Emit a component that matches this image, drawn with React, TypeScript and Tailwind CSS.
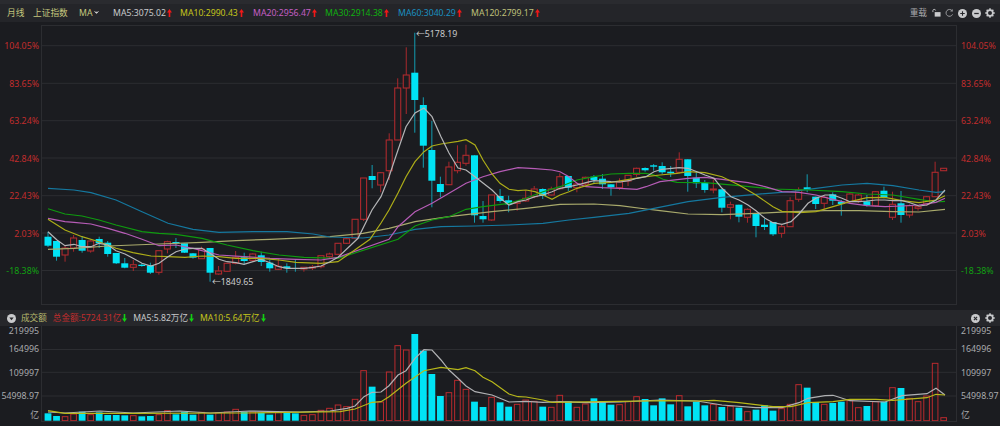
import React from "react";
import { ChevronDown } from "lucide-react";

const FONT = "font-['Noto_Sans','Noto_Sans_CJK_SC',sans-serif]";

// type, wick top, body top, body bottom, wick bottom
type Candle = [0 | 1, number, number, number, number];

const CANDLES: Candle[] = [
  [0, 231.7, 236.7, 245.7, 247], [0, 241, 241, 256.7, 260.7], [1, 245, 248, 255, 261.7], [1, 235, 238, 248, 251.7],
  [0, 236, 240, 250.7, 252.7], [1, 240, 241, 251, 252.7], [0, 236.7, 239, 243.3, 248], [0, 241, 242.7, 254, 256.7],
  [0, 253, 253, 263.3, 264], [0, 258, 263.3, 267.7, 268.3], [1, 260, 264.7, 267.3, 271], [0, 263.3, 264.7, 266, 266.7],
  [0, 262.7, 265.3, 272.7, 274], [1, 250.7, 250.7, 272.3, 274.7], [1, 240.7, 241.7, 249, 253.3], [0, 238, 242, 243.3, 248],
  [0, 243.3, 243.3, 252.7, 253], [0, 253, 253.3, 257.7, 258.7], [1, 246.7, 249, 258.7, 259], [0, 248, 248, 272.7, 281.7],
  [1, 266, 271, 274, 274.7], [1, 263.3, 263.3, 271.3, 271.7], [1, 251, 257.3, 263.3, 264.3], [0, 252.7, 257.3, 261, 264.3],
  [1, 253.3, 254, 260.3, 261.7], [0, 251.7, 255.3, 262, 266], [0, 260, 262.7, 268.3, 271.7], [1, 258.3, 266.3, 269.3, 270],
  [0, 263.3, 266.3, 268.3, 272.7], [0, 260, 268.3, 269, 271.7], [1, 267, 267.3, 269, 271.7], [1, 265, 267, 268, 270],
  [1, 255.7, 255.7, 266.7, 268.3], [1, 252.7, 254, 256.7, 258.3], [1, 243, 243.3, 254.3, 255], [1, 237.7, 238.7, 243.3, 244],
  [1, 219, 219.3, 238.3, 239.3], [1, 178, 178, 219.3, 221], [0, 165, 176, 180, 188.3], [1, 172, 172.7, 185, 192.3],
  [1, 133.3, 140, 170.7, 180], [1, 78.3, 88, 140, 140], [1, 47.3, 75, 88, 114], [0, 32.7, 72.7, 100, 132.7],
  [0, 97.3, 105, 145.7, 167.7], [0, 121, 150, 180.7, 207.3], [0, 176.7, 184, 192, 197.3], [1, 161.7, 167, 184.7, 185],
  [1, 145.3, 162.3, 170.7, 173.3], [1, 144.7, 155.3, 163.3, 165.7], [0, 155.3, 155.3, 215.3, 222.7], [0, 201, 216, 219.3, 222.7],
  [1, 195, 195, 220, 220.7], [0, 189, 196, 201, 202.7], [0, 195.7, 200.3, 204.3, 212.3], [1, 201.7, 201.7, 203.3, 210.7],
  [1, 190.7, 198.3, 201, 201.7], [1, 186, 189, 196.7, 198.3], [0, 188.3, 189, 196, 199], [1, 186.7, 189, 195, 195.7],
  [1, 173.3, 176.7, 188.7, 190], [0, 176, 176, 187.7, 191], [1, 182.3, 184, 187.7, 192.3], [1, 176.7, 177.3, 184, 185],
  [0, 175, 176.7, 180, 183.3], [0, 174, 178.7, 184.3, 189], [0, 184.3, 184.3, 187.3, 195.7], [1, 178.3, 182, 187.7, 190],
  [1, 175, 175.3, 181, 186], [1, 167.7, 168.3, 174.3, 176.7], [0, 167.3, 168, 170.3, 171.7], [0, 164, 165.3, 166.7, 170.7],
  [0, 162.3, 166, 172.3, 174], [0, 166, 171.7, 173.3, 177], [1, 152.3, 159.3, 172.3, 173.3], [0, 159.3, 159.3, 176, 191.7],
  [0, 172, 177.7, 183.3, 188], [0, 180, 182.7, 190, 192.7], [1, 179.3, 189, 190, 193.3], [0, 189.3, 189.3, 207.7, 212.3],
  [1, 201.7, 204.7, 207.3, 219.3], [0, 204.7, 204.7, 216.7, 222.3], [1, 208.3, 209.3, 217.3, 222.7], [0, 213.3, 213.3, 226, 237.3],
  [0, 218.7, 224.7, 227, 230], [0, 222, 222, 234.3, 236], [1, 225, 226.7, 233.3, 237.7], [1, 197.3, 200.7, 226.7, 226.7],
  [1, 187.3, 190, 199.3, 201.7], [0, 174.3, 187.3, 189.7, 192.3], [0, 196.7, 196.7, 204, 209], [1, 195, 197.3, 203.3, 209],
  [0, 192.3, 194.3, 200.7, 205], [0, 200, 201.7, 204, 215.7], [1, 193.3, 194, 201.7, 203.3], [1, 194, 195, 200.7, 203],
  [0, 195, 201.3, 205.3, 206.7], [1, 191, 191.7, 205.7, 206.7], [0, 186.7, 190.7, 197.7, 198.3], [1, 191.7, 204.3, 217.3, 220],
  [0, 191, 203.3, 215, 222.7], [1, 204.3, 205.7, 215, 217.7], [1, 205, 206.7, 208.3, 210.7], [1, 196, 196.7, 204, 205.7],
  [1, 161.7, 172.3, 196.7, 196.7], [1, 168.3, 168.3, 170.7, 170.7],
];

// bar top in 3x crop pixels: y = 300 + top / 3
const VOLUMES = [
  340, 348, 350, 342, 335, 344, 337, 345, 345, 346, 347, 349, 348, 344, 332, 343, 335, 344, 337, 344, 338, 336, 328, 335, 336, 338,
  344, 338, 337, 340, 346, 344, 331, 325, 315, 320, 298, 212, 260, 306, 216, 137, 150, 102, 152, 222, 288, 278, 241, 268, 305, 321,
  292, 307, 320, 313, 300, 304, 320, 322, 286, 304, 322, 312, 295, 305, 314, 314, 305, 290, 297, 316, 295, 313, 287, 319, 305, 316,
  313, 321, 319, 323, 335, 329, 316, 332, 326, 313, 254, 263, 306, 313, 309, 305, 302, 323, 318, 305, 305, 263, 264, 295, 305, 288,
  190, 353,
];

const MA5 = "48,231.7 57,240 65,245.7 74,244.3 82,246.7 91,246.7 99,243.3 108,245 116,250.7 125,254 133,258.3 142,263.3 151,266 159,263.3 168,256.7 176,251.7 185,249 193,248.3 202,248.3 210,253.3 219,259.3 227,261.7 236,262.7 244,264.3 253,261.7 261,259.3 270,262.7 279,266.7 287,268.3 296,268.3 304,268.3 313,267.3 321,266 330,261.7 338,257.3 358,238.3 372,210 381,196.7 389,176.7 398,150 406,126.7 415,113 424,108 432,116.7 441,136.7 449,153 458,168 466,170 475,176.7 483,183 492,190 500,198 509,205 518,201.7 526,200 535,196.7 543,195 552,191.7 560,188.3 569,186.7 577,185 586,182.7 594,180.7 603,181 611,181.7 620,182 629,180.7 637,178.3 646,176.7 654,171.7 662,169.3 679,167.7 688,168.3 697,171.7 705,175 714,178.3 722,188.3 731,196.7 739,200 748,205 756,210.7 765,218.3 773,222.7 782,224.3 791,221.7 799,214 808,203.3 816,198.3 825,195 833,195 842,198.3 850,201.7 859,201.7 867,201 876,200 885,200 893,200.7 902,200.7 910,202.7 919,206 927,205 936,200 945,190";
const MA10 = "48,219.3 65,230 82,236.7 99,241.7 116,248.3 133,252.7 151,256 168,256.7 185,257.3 202,256 219,256.7 236,258.3 261,258.3 279,260 296,262.3 321,263.3 338,261.7 370,239.3 381,223 389,210 398,193 406,176.7 415,161.7 424,151.7 432,146 441,144 458,141.3 466,139.7 475,145 483,160 492,174 500,183.3 509,189.3 518,190.7 526,190 535,191.7 543,195 552,199.3 560,195 569,191.7 577,188.3 594,183.3 611,182.3 629,179.3 646,176.7 660,175 677,173.3 688,171.7 705,172.7 722,176.7 739,185 756,195 773,206.7 782,211.3 799,212.7 816,211.7 833,206.7 850,201.7 867,197.7 885,197.3 902,200.7 919,202.7 936,200 945,195.7";
const MA20 = "48,218.3 65,221.7 74,222.3 91,224 108,228.3 125,233.3 142,239.3 159,245.7 176,245 193,248.3 219,255 244,256.7 270,258.3 296,259.3 321,260 338,257.3 389,239.3 398,226.7 415,211.7 432,203.3 449,193.3 466,183.3 483,176.7 500,171.7 518,167.7 535,168.7 552,170 560,171.7 569,176.7 577,183.3 586,186.7 603,187.7 620,188.3 637,189.3 646,186.7 660,181.7 688,178.3 705,177.3 722,179.3 748,182.7 765,186.7 782,191.7 799,192.3 816,195 833,199.3 850,203.3 867,205.7 885,206.7 902,206 919,205 936,202.3 945,198.3";
const MA30 = "48,208.7 65,214 82,216 99,220 116,225 142,231.7 159,233.3 176,234.3 202,238.3 227,245 253,250.7 279,255 304,257.3 338,258.3 398,239.3 415,226 432,220 449,216.7 466,209.3 483,206.7 509,203.3 526,198.3 543,191.7 560,186.7 577,180 594,176.7 611,174 629,173.3 646,173.3 654,175 663,179.3 677,182.3 705,182.7 739,185.7 773,189 808,190 842,191.7 867,194 893,195 919,199.3 936,202 945,201.3";
const MA60 = "48,188.3 74,190 91,192.7 116,200 142,211.7 168,223.3 193,229.3 219,232.3 253,231.7 287,231.7 313,234 330,237 363,238 389,235 415,229.3 441,226.7 475,226 509,225 543,223.3 569,220 594,217.3 629,213.3 654,208.3 688,201.7 722,197.3 756,194.3 791,191.7 816,188.3 842,185 867,183.3 893,185.7 919,190 936,192.3 945,191.7";
const MA120 = "48,249.3 74,248.3 108,246 159,244 202,242.3 236,240.7 270,239.3 313,237.3 330,236.7 363,233.3 389,228.3 415,221.7 449,216.7 492,211.7 526,208.3 560,204.3 594,204 620,205.7 646,209 660,210.7 688,214 722,214.7 756,213.3 791,211.7 825,210.7 859,210.7 893,211.7 919,212 945,209.3";
const VOL5 = "48,412 65,413 100,411 133,413 180,411 210,413 250,411 300,412 330,411 347,408.3 355,406 364,396.7 372,392.3 381,392 389,385.7 398,375 406,370.7 415,358.3 424,349.7 432,350 441,360 449,370 458,378.3 466,386 475,391.7 492,395 500,398.3 509,402 526,401.3 543,402.3 560,401.7 586,402.7 620,402 660,400 697,401 722,405 756,407.7 782,407.7 799,402.7 808,398.3 825,395.7 833,395.3 850,400.7 885,402 902,395.7 927,393.7 936,388.3 945,395";
const VOL10 = "48,410.7 65,413.3 133,413.3 244,413 340,411.7 355,409 372,402.3 381,401.7 389,396.7 406,383.3 424,370.7 441,367.3 458,369.7 466,367.7 475,370.7 483,377.3 492,381.7 509,394 518,396.7 526,397 543,400 552,402.3 670,400.7 697,401 714,400.3 739,402.7 773,406.7 791,406.7 808,402.7 833,401.7 850,399.3 876,399.3 893,400.3 927,397.7 936,394.3 945,395";

const barX = (i: number) => 48 + 8.53 * i;

function UpArrow() {
  return (
    <svg width="5" height="8" viewBox="0 0 5 8" className="ml-[1px] shrink-0">
      <path d="M2.5 0 L5 3.5 H3.3 V8 H1.7 V3.5 H0 Z" fill="#f01818" />
    </svg>
  );
}

function DownArrow() {
  return (
    <svg width="5" height="8" viewBox="0 0 5 8" className="ml-[1px] shrink-0">
      <path d="M2.5 8 L5 4.5 H3.3 V0 H1.7 V4.5 H0 Z" fill="#12d012" />
    </svg>
  );
}

function Gear() {
  return (
    <svg width="10" height="10" viewBox="0 0 12 12">
      <circle cx="6" cy="6" r="3.4" fill="none" stroke="#c9cacc" strokeWidth="2" />
      <path
        d="M6 0.3V2.5M6 9.5V11.7M0.3 6H2.5M9.5 6H11.7M2 2L3.5 3.5M8.5 8.5L10 10M10 2L8.5 3.5M3.5 8.5L2 10"
        stroke="#c9cacc"
        strokeWidth="1.8"
      />
    </svg>
  );
}

function RoundIcon({ mark }: { mark: "plus" | "minus" | "close" | "down" }) {
  return (
    <svg width="9" height="9" viewBox="0 0 10 10">
      <circle cx="5" cy="5" r="5" fill="#c9cacc" />
      {mark === "plus" && <path d="M5 2.5V7.5M2.5 5H7.5" stroke="#26272b" strokeWidth="1.2" />}
      {mark === "minus" && <path d="M2.5 5H7.5" stroke="#26272b" strokeWidth="1.4" />}
      {mark === "close" && <path d="M3.2 3.2L6.8 6.8M6.8 3.2L3.2 6.8" stroke="#26272b" strokeWidth="1.2" />}
      {mark === "down" && <path d="M2.6 3.8H7.4L5 7Z" fill="#26272b" />}
    </svg>
  );
}

function MaLabel({ text, color, className }: { text: string; color: string; className: string }) {
  return (
    <span className={`flex items-center ${className} ${color}`}>
      {text}
      <UpArrow />
    </span>
  );
}

function Header() {
  return (
    <div className="flex h-[18px] items-center justify-between bg-[#242529] pl-[7px] pr-[5px] text-[8.7px] leading-none">
      <div className="flex items-center">
        <span className="w-[26px] text-[#c4c77e]">月线</span>
        <span className="w-[46px] text-[#c4c77e]">上证指数</span>
        <span className="flex w-[34px] items-center text-[#c4c77e]">
          MA
          <ChevronDown className="ml-[1px] h-[7px] w-[7px] fill-[#c9cacc] text-[#c9cacc]" strokeWidth={3} />
        </span>
        <MaLabel text="MA5:3075.02" color="text-[#c8c9cb]" className="w-[67px]" />
        <MaLabel text="MA10:2990.43" color="text-[#c4c41c]" className="w-[73px]" />
        <MaLabel text="MA20:2956.47" color="text-[#c45fc4]" className="w-[72px]" />
        <MaLabel text="MA30:2914.38" color="text-[#10b010]" className="w-[73px]" />
        <MaLabel text="MA60:3040.29" color="text-[#1a8fc0]" className="w-[73px]" />
        <MaLabel text="MA120:2799.17" color="text-[#bfc07a]" className="w-[73px]" />
      </div>
      <div className="flex items-center text-[#a9aaad]">
        <span className="mr-[5px]">重载</span>
        <svg width="9" height="10" viewBox="0 0 10 10">
          <path d="M1 4V2.2C1 .6 4 .6 4 2.2" fill="none" stroke="#c9cacc" strokeWidth="1" />
          <rect x="3" y="4" width="6.5" height="5" fill="#c9cacc" />
        </svg>
        <svg width="9" height="10" viewBox="0 0 10 10" className="ml-[4px]">
          <path d="M8.4 6.5A3.8 3.8 0 1 1 8 2.6" fill="none" stroke="#9a9b9e" strokeWidth="1.1" />
          <path d="M8.6 0.6V3.4H5.8Z" fill="#9a9b9e" />
        </svg>
        <span className="ml-[4px] flex items-center gap-[5px]">
          <RoundIcon mark="plus" />
          <RoundIcon mark="minus" />
        </span>
        <span className="ml-[4px] flex">
          <Gear />
        </span>
      </div>
    </div>
  );
}

function AxisLabels({ labels, side }: { labels: [string, string][]; side: "left" | "right" }) {
  return (
    <div
      className={`flex shrink-0 flex-col pt-[21px] text-[8.8px] leading-none ${side === "left" ? "w-[41px] items-end pr-[2px]" : "w-[43px] items-start pl-[4px]"}`}
    >
      {labels.map(([t, c]) => (
        <span key={t} className={`flex h-[37.5px] items-start ${c}`}>
          <span className="-mt-[4px]">{t}</span>
        </span>
      ))}
    </div>
  );
}

const PRICE_LABELS: [string, string][] = [
  ["104.05%", "text-[#c22d2d]"],
  ["83.65%", "text-[#c22d2d]"],
  ["63.24%", "text-[#c22d2d]"],
  ["42.84%", "text-[#c22d2d]"],
  ["22.43%", "text-[#c22d2d]"],
  ["2.03%", "text-[#c22d2d]"],
  ["-18.38%", "text-[#12a012]"],
];

function PriceChart() {
  return (
    <div className="relative h-[280px] flex-1 border border-[#2c2d31]">
      <svg viewBox="42 26 914 278" className="block h-full w-full">
        {[45.7, 83.3, 120.7, 158, 195.7, 233, 270.5].map((y) => (
          <line key={y} x1="41" x2="957" y1={y} y2={y} stroke="#2c2d31" strokeWidth="1" />
        ))}
        {CANDLES.map(([type, wt, bt, bb, wb], i) => {
          const x = barX(i);
          return (
            <g key={i}>
              <line x1={x} x2={x} y1={wt} y2={wb} stroke={type ? "#a8282c" : "#139db0"} strokeWidth="1" />
              {type ? (
                <rect x={x - 3} y={bt} width="6" height={bb - bt} fill="#1b1c20" stroke="#ad2a2e" strokeWidth="1.1" />
              ) : (
                <rect x={x - 3.5} y={bt} width="7" height={bb - bt} fill="#00e3f5" />
              )}
            </g>
          );
        })}
        <polyline points={MA120} fill="none" stroke="#a9aa6c" strokeWidth="1.2" />
        <polyline points={MA60} fill="none" stroke="#15789f" strokeWidth="1.2" />
        <polyline points={MA30} fill="none" stroke="#0f9a0f" strokeWidth="1.2" />
        <polyline points={MA20} fill="none" stroke="#b65cb6" strokeWidth="1.2" />
        <polyline points={MA10} fill="none" stroke="#adad18" strokeWidth="1.2" />
        <polyline points={MA5} fill="none" stroke="#b4b5b7" strokeWidth="1.2" />
      </svg>
      <span className="absolute left-[374px] top-[2px] text-[8.8px] leading-[12px] text-[#c9cacc]">←5178.19</span>
      <span className="absolute left-[170px] top-[250px] text-[8.8px] leading-[12px] text-[#c9cacc]">←1849.65</span>
    </div>
  );
}

function VolumeHeader() {
  return (
    <div className="flex h-[16px] items-center justify-between bg-[#26272b] pl-[7px] pr-[5px] text-[8.6px] leading-none">
      <div className="flex items-center">
        <RoundIcon mark="down" />
        <span className="ml-[5px] text-[#b9ba6e]">成交额</span>
        <span className="ml-[6px] flex items-center text-[#c22d2d]">
          总金额:5724.31亿
          <DownArrow />
        </span>
        <span className="ml-[6px] flex items-center text-[#c8c9cb]">
          MA5:5.82万亿
          <DownArrow />
        </span>
        <span className="ml-[6px] flex items-center text-[#c4c41c]">
          MA10:5.64万亿
          <DownArrow />
        </span>
      </div>
      <div className="flex items-center gap-[5px]">
        <RoundIcon mark="close" />
        <Gear />
      </div>
    </div>
  );
}

function VolumeChart() {
  return (
    <div className="h-[96px] flex-1 border-x border-b border-[#2c2d31]">
      <svg viewBox="42 326 914 95" className="block h-full w-full">
        {[349.5, 372.3, 396].map((y) => (
          <line key={y} x1="41" x2="957" y1={y} y2={y} stroke="#2c2d31" strokeWidth="1" />
        ))}
        {VOLUMES.map((top, i) => {
          const x = barX(i);
          const y = 300 + top / 3;
          return CANDLES[i][0] ? (
            <rect key={i} x={x - 2.8} y={y} width="5.6" height={420.7 - y} fill="none" stroke="#b92a2e" strokeWidth="1" />
          ) : (
            <rect key={i} x={x - 3.4} y={y} width="6.8" height={420.7 - y} fill="#00e3f5" />
          );
        })}
        <polyline points={VOL5} fill="none" stroke="#b0b1b3" strokeWidth="1.2" />
        <polyline points={VOL10} fill="none" stroke="#b8b81a" strokeWidth="1.2" />
      </svg>
    </div>
  );
}

function VolumeAxis({ side }: { side: "left" | "right" }) {
  const rows = ["219995", "164996", "109997", "54998.97", "亿"];
  const offsets = ["mt-0", "mt-[8px]", "mt-[14px]", "mt-[13px]", "mt-[9px]"];
  return (
    <div
      className={`flex shrink-0 flex-col text-[8.8px] leading-none text-[#a9aaad] ${side === "left" ? "w-[41px] items-end pr-[2px]" : "w-[43px] items-start pl-[4px]"}`}
    >
      {rows.map((t, i) => (
        <span key={t} className={`flex h-[10px] items-center ${offsets[i]}`}>
          {t}
        </span>
      ))}
    </div>
  );
}

export default function App() {
  return (
    <div className={`h-[426px] w-[1000px] overflow-hidden bg-[#1b1c20] ${FONT}`}>
      <div className="h-[4px] bg-[#2a2b2f]" />
      <Header />
      <div className="flex h-[288px] items-start pt-[3px]">
        <AxisLabels labels={PRICE_LABELS} side="left" />
        <PriceChart />
        <AxisLabels labels={PRICE_LABELS} side="right" />
      </div>
      <VolumeHeader />
      <div className="flex items-start">
        <VolumeAxis side="left" />
        <VolumeChart />
        <VolumeAxis side="right" />
      </div>
    </div>
  );
}
